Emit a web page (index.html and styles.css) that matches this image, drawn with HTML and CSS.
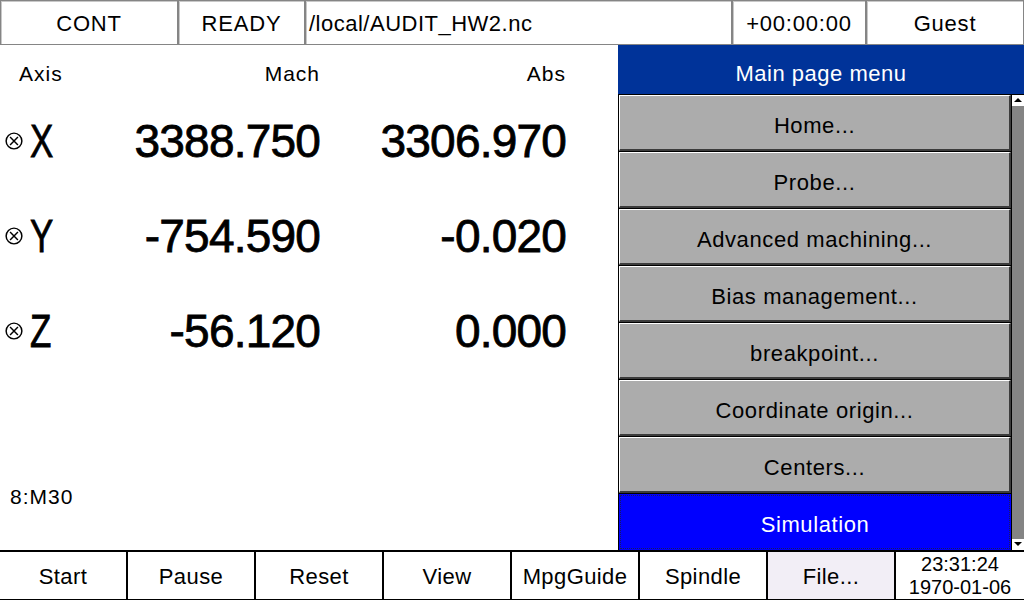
FILE: index.html
```html
<!DOCTYPE html>
<html lang="en">
<head>
    <meta charset="UTF-8">
    <meta content="width=device-width, initial-scale=1.0" name="viewport">
    <title>CNC main page</title>
    <link rel="stylesheet" href="styles.css">
</head>
<body>
<div class="screen">
    <header class="status-bar">
        <div class="status-cell mode">CONT</div>
        <div class="status-cell state">READY</div>
        <div class="status-cell file">/local/AUDIT_HW2.nc</div>
        <div class="status-cell timer">+00:00:00</div>
        <div class="status-cell user">Guest</div>
    </header>

    <main class="workspace">
        <section class="axes">
            <div class="axes-head">
                <span class="head-axis">Axis</span>
                <span class="head-num">Mach</span>
                <span class="head-num">Abs</span>
            </div>
            <div class="axis-row">
                <span class="axis-name">
                    <svg class="axis-flag" viewBox="0 0 16 16"><circle cx="8" cy="8" r="7"/><path d="M4.5 4.5L11.5 11.5M11.5 4.5L4.5 11.5"/></svg>
                    <b>X</b>
                </span>
                <span class="num">3388.750</span>
                <span class="num">3306.970</span>
            </div>
            <div class="axis-row">
                <span class="axis-name">
                    <svg class="axis-flag" viewBox="0 0 16 16"><circle cx="8" cy="8" r="7"/><path d="M4.5 4.5L11.5 11.5M11.5 4.5L4.5 11.5"/></svg>
                    <b>Y</b>
                </span>
                <span class="num">-754.590</span>
                <span class="num">-0.020</span>
            </div>
            <div class="axis-row">
                <span class="axis-name">
                    <svg class="axis-flag" viewBox="0 0 16 16"><circle cx="8" cy="8" r="7"/><path d="M4.5 4.5L11.5 11.5M11.5 4.5L4.5 11.5"/></svg>
                    <b>Z</b>
                </span>
                <span class="num">-56.120</span>
                <span class="num">0.000</span>
            </div>
            <div class="program-line">8:M30</div>
        </section>

        <aside class="menu">
            <div class="menu-title">Main page menu</div>
            <div class="menu-body">
                <ul class="menu-list">
                    <li class="menu-item">Home...</li>
                    <li class="menu-item">Probe...</li>
                    <li class="menu-item">Advanced machining...</li>
                    <li class="menu-item">Bias management...</li>
                    <li class="menu-item">breakpoint...</li>
                    <li class="menu-item">Coordinate origin...</li>
                    <li class="menu-item">Centers...</li>
                    <li class="menu-item selected">Simulation</li>
                </ul>
                <div class="scrollbar">
                    <span class="scroll-btn up"></span>
                    <span class="scroll-track"></span>
                    <span class="scroll-btn down"></span>
                </div>
            </div>
        </aside>
    </main>

    <footer class="softkeys">
        <div class="softkey">Start</div>
        <div class="softkey">Pause</div>
        <div class="softkey">Reset</div>
        <div class="softkey">View</div>
        <div class="softkey">MpgGuide</div>
        <div class="softkey">Spindle</div>
        <div class="softkey active">File...</div>
        <div class="clock">
            <span>23:31:24</span>
            <span>1970-01-06</span>
        </div>
    </footer>
</div>
</body>
</html>
```

FILE: styles.css
```css
body {
    font-family: "Liberation Sans", Arial, sans-serif;
    margin: 0;
    background: #fff;
    color: #000;
}

.screen {
    width: 1024px;
    height: 600px;
    display: grid;
    grid-template-rows: 45px 505px 50px;
    overflow: hidden;
}

/* top status line */
.status-bar {
    display: flex;
}

.status-cell {
    box-sizing: border-box;
    height: 45px;
    border: 1px solid #858585;
    box-shadow: inset 1px 1px 0 #c8c8c8;
    display: flex;
    align-items: center;
    justify-content: center;
    padding-top: 2px;
    font-size: 22px;
    letter-spacing: 0.8px;
}

.mode { width: 178px; }
.state { width: 127px; }
.file { width: 427px; justify-content: flex-start; padding-left: 3px; letter-spacing: 0.5px; }
.timer { width: 134px; }
.user { width: 158px; }

.workspace {
    display: grid;
    grid-template-columns: 618px 406px;
    min-height: 0;
}

/* axis positions */
.axes {
    display: flex;
    flex-direction: column;
}

.axes-head,
.axis-row {
    display: grid;
    grid-template-columns: 120px 200px 246px;
}

.axes-head {
    height: 48px;
    padding-top: 17px;
    box-sizing: border-box;
    font-size: 21px;
    letter-spacing: 1px;
    line-height: 24px;
}

.head-axis { padding-left: 19px; }
.head-num { text-align: right; }

.axis-row {
    height: 95px;
    align-items: center;
}

.axis-name {
    display: flex;
    align-items: center;
    gap: 7px;
    padding-left: 5px;
}

.axis-flag {
    width: 18px;
    height: 18px;
    fill: none;
    stroke: #000;
    stroke-width: 1.3;
}

.axis-name b {
    display: inline-block;
    font-size: 46px;
    font-weight: normal;
    line-height: 1;
    -webkit-text-stroke: 0.8px #000;
    transform: scaleX(0.76);
    transform-origin: left center;
}

.num {
    text-align: right;
    font-size: 46px;
    line-height: 1;
    letter-spacing: -0.8px;
    -webkit-text-stroke: 0.8px #000;
}

.program-line {
    margin-top: auto;
    padding: 0 0 41px 10px;
    font-size: 21px;
    letter-spacing: 1px;
    line-height: 24px;
}

/* menu on the right */
.menu {
    display: flex;
    flex-direction: column;
    min-height: 0;
}

.menu-title {
    height: 50px;
    flex: none;
    box-sizing: border-box;
    padding-top: 8px;
    background: #003399;
    color: #fff;
    border-bottom: 1px solid #000;
    display: flex;
    align-items: center;
    justify-content: center;
    font-size: 22px;
    letter-spacing: 0.5px;
}

.menu-body {
    flex: 1;
    min-height: 0;
    display: flex;
    border-left: 1px solid #000;
    background: #000;
}

.menu-list {
    list-style: none;
    margin: 0;
    padding: 0;
    width: 392px;
    overflow: hidden;
}

.menu-item {
    box-sizing: border-box;
    height: 56px;
    margin-bottom: 1px;
    padding-top: 6px;
    background: #acacac;
    border-top: 1px solid #fff;
    border-left: 1px solid #fff;
    border-right: 2px solid #3c3c3c;
    border-bottom: 2px solid #3c3c3c;
    display: flex;
    align-items: center;
    justify-content: center;
    font-size: 22px;
    letter-spacing: 0.6px;
}

.menu-item.selected {
    background: #0000ff;
    color: #fff;
    border: 1px solid #0000ff;
    outline: 1px dotted #1a1a60;
    outline-offset: -2px;
}

.scrollbar {
    width: 12px;
    border-left: 1px solid #000;
    background: #848484;
    display: flex;
    flex-direction: column;
}

.scroll-btn {
    height: 11px;
    background: #fff;
    position: relative;
}

.scroll-btn::after {
    content: "";
    position: absolute;
    left: 2px;
    top: 3px;
    border-left: 4px solid transparent;
    border-right: 4px solid transparent;
}

.scroll-btn.up::after { border-bottom: 4px solid #000; }
.scroll-btn.down::after { border-top: 4px solid #000; }

.scroll-track { flex: 1; }

/* soft keys along the bottom */
.softkeys {
    display: flex;
    border-top: 2px solid #000;
    border-bottom: 1px solid #000;
}

.softkey {
    width: 126px;
    border-right: 2px solid #000;
    display: flex;
    align-items: center;
    justify-content: center;
    font-size: 22px;
    letter-spacing: 0.4px;
    padding-top: 2px;
}

.softkey.active {
    background: #f2eef6;
}

.clock {
    flex: 1;
    display: flex;
    flex-direction: column;
    align-items: center;
    justify-content: center;
    font-size: 20px;
    line-height: 23px;
}
```
